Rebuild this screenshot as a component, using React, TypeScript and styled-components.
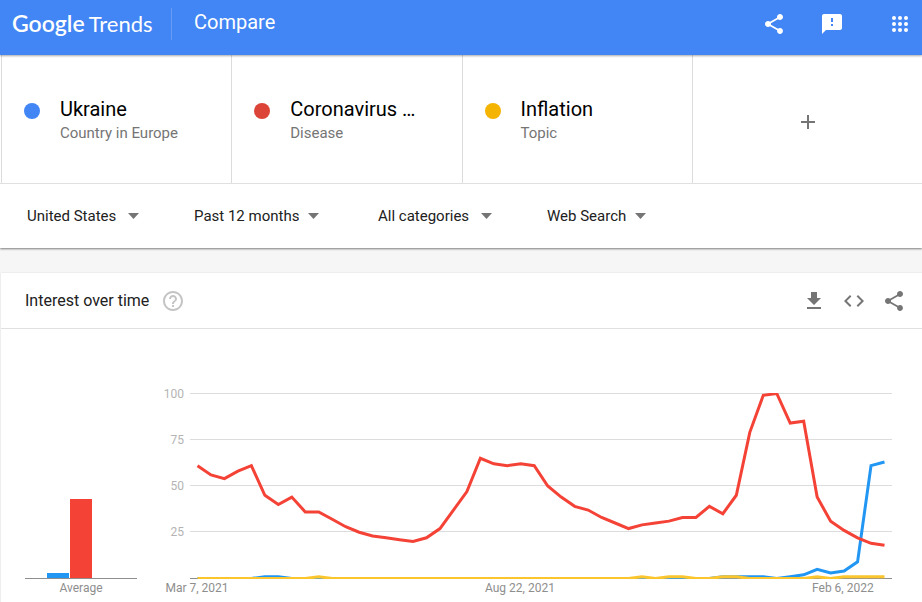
import React from "react";
import styled, { createGlobalStyle } from "styled-components";
import {
  MdAdd,
  MdCode,
  MdFeedback,
  MdFileDownload,
  MdHelpOutline,
  MdShare,
} from "react-icons/md";

const GlobalStyle = createGlobalStyle`
  *, *::before, *::after { box-sizing: border-box; }
  body { margin: 0; background: #f6f6f6; font-family: Roboto, "Liberation Sans", sans-serif; color: #212121; }
  h1, h2, h3, p { margin: 0; font-weight: 400; }
`;

const Page = styled.div`
  display: flex;
  flex-direction: column;
  min-height: 100vh;
`;

const TopBar = styled.header`
  display: flex;
  align-items: center;
  height: 55px;
  padding: 0 10px 8px 12px;
  background: #4285f4;
  color: #fff;
  box-shadow: 0 1px 2px rgba(0, 0, 0, 0.35);
  z-index: 1;
`;

const Logo = styled.a`
  display: flex;
  align-items: baseline;
  gap: 4px;
  width: 159px;
  color: #fff;
  text-decoration: none;
  font-family: Lato, sans-serif;
  line-height: 32px;
`;

const LogoGoogle = styled.span`
  font-size: 23px;
  font-weight: 600;
`;

const LogoTrends = styled.span`
  font-size: 22px;
`;

const PageTitle = styled.h1`
  flex: 1;
  padding: 0 0 4px 22px;
  border-left: 1px solid #689df6;
  font-size: 20px;
  line-height: 28px;
`;

const IconButton = styled.button<{ $muted?: boolean }>`
  display: grid;
  place-items: center;
  width: 24px;
  height: 24px;
  padding: 0;
  border: 0;
  background: none;
  color: ${(p) => (p.$muted ? "#757575" : "#fff")};
  font-size: 24px;
  cursor: pointer;
`;

const TopActions = styled.div`
  display: flex;
  align-items: center;
  gap: 34px;

  & > :last-child {
    margin-left: 10px;
  }
`;

const Panel = styled.section`
  background: #fff;
  box-shadow: 0 1px 2px rgba(0, 0, 0, 0.5);
`;

const Terms = styled.div`
  display: grid;
  grid-template-columns: repeat(4, 1fr);
  padding-left: 1px;
  border-bottom: 1px solid #e0e0e0;
`;

const Term = styled.article`
  display: flex;
  gap: 20px;
  height: 128px;
  padding: 42px 16px 0 22px;
  border-left: 1px solid #dcdcdc;
`;

const Dot = styled.span<{ $color: string }>`
  flex: none;
  width: 16px;
  height: 16px;
  margin-top: 6px;
  border-radius: 50%;
  background: ${(p) => p.$color};
`;

const TermName = styled.h2`
  color: #000;
  font-size: 20px;
  line-height: 24px;
`;

const TermKind = styled.p`
  color: #757575;
  font-size: 15px;
  line-height: 24px;
`;

const AddTerm = styled.button`
  display: grid;
  place-items: center;
  height: 128px;
  padding: 6px 0 0 2px;
  border: 0;
  border-left: 1px solid #dcdcdc;
  background: none;
  color: #757575;
  font-size: 24px;
  cursor: pointer;
`;

const Filters = styled.div`
  display: grid;
  grid-template-columns: 167px 184px 169px auto;
  align-items: center;
  justify-content: start;
  height: 64px;
  padding-left: 27px;
`;

const Field = styled.div`
  display: grid;
  justify-content: start;
  align-items: center;

  & > * {
    grid-area: 1 / 1;
  }
`;

const Select = styled.select<{ $compact?: boolean }>`
  appearance: none;
  field-sizing: content;
  padding: 0 ${(p) => (p.$compact ? 20 : 23)}px 0 0;
  border: 0;
  background: none;
  color: #212121;
  font-family: inherit;
  font-size: 15px;
  line-height: 24px;
`;

const Arrow = styled.svg`
  justify-self: end;
  width: 11px;
  height: 6px;
  fill: #757575;
  pointer-events: none;
`;

const Card = styled.section`
  flex: 1;
  margin: 25px 0 0 1px;
  background: #fff;
  box-shadow: 0 0 1px rgba(0, 0, 0, 0.2);
`;

const CardHeader = styled.div`
  display: flex;
  align-items: center;
  gap: 12px;
  height: 56px;
  padding: 0 16px 0 24px;
  border-bottom: 1px solid #e0e0e0;
`;

const CardTitle = styled.h2`
  font-size: 16px;
  line-height: 24px;
`;

const HelpButton = styled(IconButton)`
  color: #c4c4c4;
`;

const CardActions = styled.div`
  display: flex;
  gap: 16px;
  margin-left: auto;
`;

const Charts = styled.div`
  display: flex;
  gap: 53px;
  padding: 64px 30px 0 24px;
`;

const ChartSvg = styled.svg`
  display: block;
  height: 206px;
  overflow: visible;
  font-size: 12px;
`;

const BarChart = styled(ChartSvg)`
  flex: none;
  width: 112px;
`;

const LineChart = styled(ChartSvg)`
  flex: 1;
  min-width: 0;
`;

const terms = [
  { name: "Ukraine", kind: "Country in Europe", color: "#4285f4" },
  { name: "Coronavirus …", kind: "Disease", color: "#db4437" },
  { name: "Inflation", kind: "Topic", color: "#f4b400" },
];

const filters = [
  { label: "Region", value: "United States", compact: false },
  { label: "Time range", value: "Past 12 months", compact: true },
  { label: "Category", value: "All categories", compact: false },
  { label: "Search type", value: "Web Search", compact: true },
];

const WEEKS = 52;

// Expands a sparse { week: value } map to one value per week.
const weekly = (values: Record<number, number>) =>
  Array.from({ length: WEEKS }, (_, i) => values[i] ?? 0);

const series = [
  {
    color: "#2196f3",
    values: weekly({
      5: 1, 6: 1, 39: 1, 40: 1, 41: 1, 42: 1, 44: 1, 45: 2,
      46: 5, 47: 3, 48: 4, 49: 9, 50: 61, 51: 63,
    }),
  },
  {
    color: "#f44336",
    values: [
      61, 56, 54, 58, 61, 45, 40, 44, 36, 36, 32, 28, 25, 23, 22, 21, 20, 22,
      27, 37, 47, 65, 62, 61, 62, 61, 50, 44, 39, 37, 33, 30, 27, 29, 30, 31,
      33, 33, 39, 35, 45, 79, 99, 100, 84, 85, 44, 31, 26, 22, 19, 18,
    ],
  },
  {
    color: "#fbc62d",
    values: weekly({
      9: 1, 33: 1, 35: 1, 36: 1, 39: 1, 40: 1, 46: 1, 48: 1, 49: 1, 50: 1, 51: 1,
    }),
  },
];

const PLOT_WIDTH = 702;
const PLOT_HEIGHT = 185;
const INSET = 7.5;

const toY = (value: number) => PLOT_HEIGHT * (1 - value / 100);

const toPoints = (values: number[]) =>
  values
    .map((v, i) => {
      const x = INSET + (i * (PLOT_WIDTH - 2 * INSET)) / (WEEKS - 1);
      return `${x.toFixed(2)},${toY(v).toFixed(2)}`;
    })
    .join(" ");

function AppsIcon() {
  return (
    <svg width="24" height="24" viewBox="0 0 24 24" fill="currentColor" aria-hidden="true">
      {[6, 12, 18].map((y) =>
        [6, 12, 18].map((x) => <circle key={`${x}-${y}`} cx={x} cy={y} r="2" />)
      )}
    </svg>
  );
}

function Averages() {
  return (
    <BarChart role="img" aria-label="Average interest">
      <rect x="22" y="180" width="22" height="5" fill="#2196f3" />
      <rect x="45" y="106" width="22" height="79" fill="#f44336" />
      <rect x="0" y="185" width="112" height="1" fill="#8e8e8e" />
      <text x="56" y="199" textAnchor="middle" fill="#8e8e8e">Average</text>
    </BarChart>
  );
}

function Timeline() {
  return (
    <LineChart role="img" aria-label="Interest over time">
      {[100, 75, 50, 25].map((tick) => (
        <g key={tick}>
          <rect x="0" y={Math.floor(toY(tick))} width="100%" height="1" fill="#dcdcdc" />
          <text x="-6" y={Math.floor(toY(tick)) + 5} textAnchor="end" fill="#b4b4b4">
            {tick}
          </text>
        </g>
      ))}
      <rect x="0" y="185" width="100%" height="1" fill="#8e8e8e" />
      <svg
        width="100%"
        height="186"
        viewBox="0 -0.5 702 186"
        preserveAspectRatio="none"
        overflow="hidden"
      >
        {series.map((s) => (
          <polyline
            key={s.color}
            points={toPoints(s.values)}
            fill="none"
            stroke={s.color}
            strokeWidth="3"
            vectorEffect="non-scaling-stroke"
          />
        ))}
      </svg>
      <g fill="#8e8e8e" textAnchor="middle">
        <text x="1%" y="199">Mar 7, 2021</text>
        <text x="47%" y="199">Aug 22, 2021</text>
        <text x="93%" y="199">Feb 6, 2022</text>
      </g>
    </LineChart>
  );
}

export default function App() {
  return (
    <Page>
      <GlobalStyle />
      <TopBar>
        <Logo href="#">
          <LogoGoogle>Google</LogoGoogle>
          <LogoTrends>Trends</LogoTrends>
        </Logo>
        <PageTitle>Compare</PageTitle>
        <TopActions>
          <IconButton aria-label="Share"><MdShare /></IconButton>
          <IconButton aria-label="Send feedback"><MdFeedback /></IconButton>
          <IconButton aria-label="Google apps"><AppsIcon /></IconButton>
        </TopActions>
      </TopBar>

      <Panel>
        <Terms>
          {terms.map((term) => (
            <Term key={term.name}>
              <Dot $color={term.color} />
              <div>
                <TermName>{term.name}</TermName>
                <TermKind>{term.kind}</TermKind>
              </div>
            </Term>
          ))}
          <AddTerm aria-label="Add comparison"><MdAdd /></AddTerm>
        </Terms>
        <Filters>
          {filters.map((filter) => (
            <Field key={filter.label}>
              <Select aria-label={filter.label} $compact={filter.compact}>
                <option>{filter.value}</option>
              </Select>
              <Arrow viewBox="0 0 11 6" aria-hidden="true">
                <path d="M0 0h11L5.500 6z" />
              </Arrow>
            </Field>
          ))}
        </Filters>
      </Panel>

      <Card>
        <CardHeader>
          <CardTitle>Interest over time</CardTitle>
          <HelpButton aria-label="Help"><MdHelpOutline /></HelpButton>
          <CardActions>
            <IconButton $muted aria-label="Download CSV"><MdFileDownload /></IconButton>
            <IconButton $muted aria-label="Embed"><MdCode /></IconButton>
            <IconButton $muted aria-label="Share chart"><MdShare /></IconButton>
          </CardActions>
        </CardHeader>
        <Charts>
          <Averages />
          <Timeline />
        </Charts>
      </Card>
    </Page>
  );
}
